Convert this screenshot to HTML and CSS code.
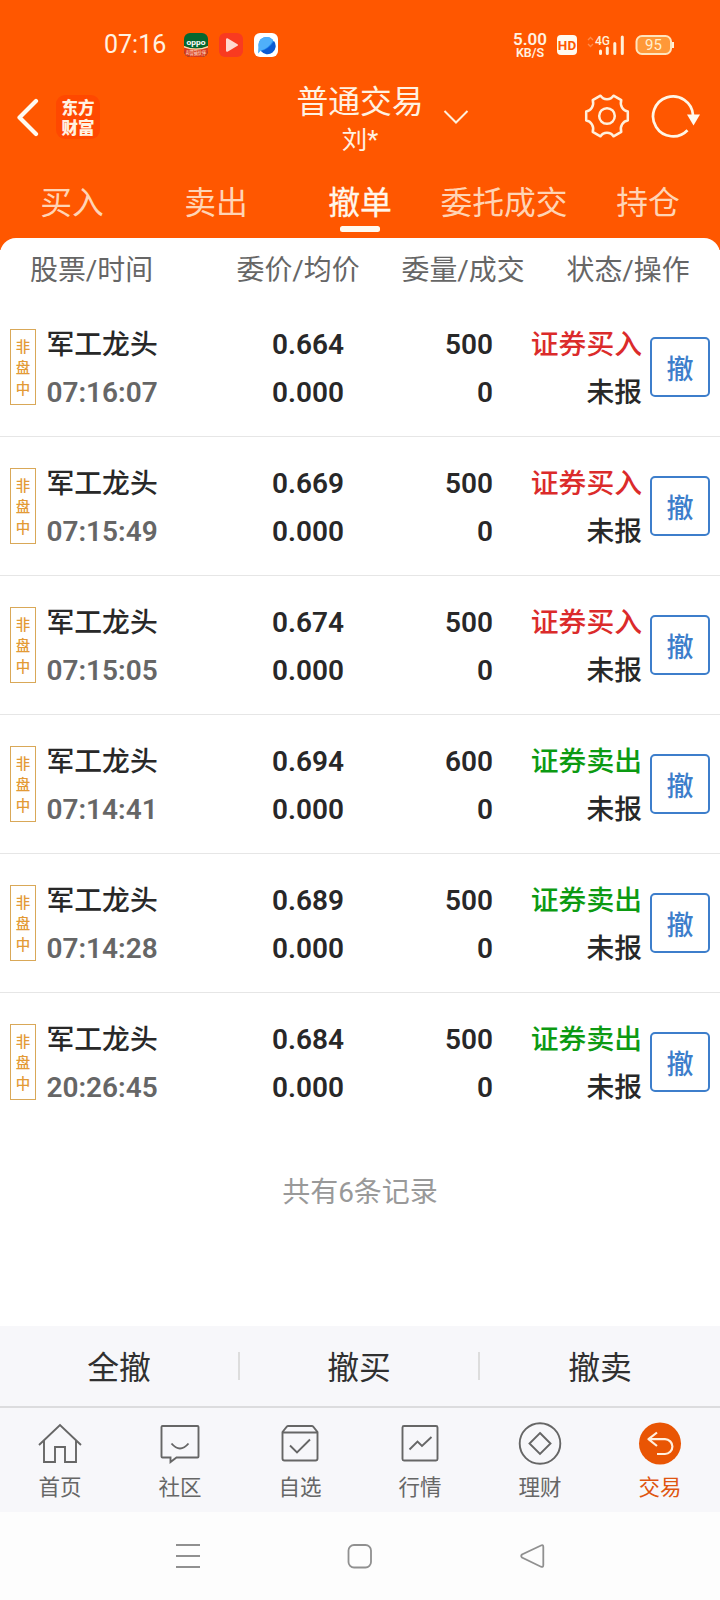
FILE: index.html
```html
<!DOCTYPE html>
<html lang="zh-CN">
<head>
<meta charset="utf-8">
<title>普通交易</title>
<link rel="stylesheet" href="styles.css">
</head>
<body>
<header class="top">
  <div class="status">
    <span class="clock">07:16</span>
    <svg class="app" width="24" height="24" viewBox="0 0 24 24"><defs><clipPath id="r"><rect width="24" height="24" rx="6"/></clipPath></defs><g clip-path="url(#r)"><rect width="24" height="24" fill="#04672f"/><path d="M0 13Q12 18 24 13V24H0Z" fill="#d83a20"/><path d="M0 13Q12 18 24 13V14.500Q12 19 0 14.500Z" fill="#f3e6b0"/></g><text x="12" y="11.500" text-anchor="middle" textLength="19" lengthAdjust="spacingAndGlyphs" class="oppo">oppo</text><text x="12" y="22" text-anchor="middle" class="tiny" textLength="20" lengthAdjust="spacingAndGlyphs">AI营销伙伴</text></svg>
    <svg class="app" width="24" height="24" viewBox="0 0 24 24"><rect width="24" height="24" rx="6" fill="#f93a20"/><path d="M8 6.200V17.800L18 12Z" fill="#ffd9d0" stroke="#ffd9d0" stroke-width="2" stroke-linejoin="round"/></svg>
    <svg class="app" width="24" height="24" viewBox="0 0 24 24"><rect width="24" height="24" rx="6" fill="#fff"/><circle cx="12.500" cy="12" r="8" fill="#238df0"/><path d="M20 8A8 8 0 0 1 7 18Q15 16 20 8Z" fill="#0b5bd3"/><path d="M4.500 12A8 8 0 0 1 19 7.500Q15 15 7 17.500L4 20.500Z" fill="#4fb0fa"/></svg>
    <div class="speed"><b>5.00</b><b>KB/S</b></div>
    <span class="hd">HD</span>
    <svg class="signal" width="40" height="24" viewBox="0 0 40 24"><path d="M2 7L4.500 4.500L7 7M2 11L4.500 13.500L7 11" fill="none" stroke="#ff8a48" stroke-width="1.300"/><text x="9" y="12" class="net" textLength="15" lengthAdjust="spacingAndGlyphs">4G</text><path d="M14.500 20.500V18M21.300 20.500V15M28.800 20.500V10.500M36.300 20.500V4" stroke="#fff0d8" stroke-width="3" stroke-linecap="round"/></svg>
    <svg class="battery" width="40" height="22" viewBox="0 0 40 22"><rect x="1.500" y="2" width="34.500" height="18" rx="5.500" fill="#ff9838" stroke="#ffe4bd" stroke-width="2"/><path d="M38 8V14" stroke="#fff0d8" stroke-width="2"/><text x="18.500" y="16" text-anchor="middle" class="level">95</text></svg>
  </div>
  <div class="titlebar">
    <svg class="back" width="24" height="44" viewBox="0 0 24 44"><path d="M19 6L2.500 22.500L19 39" fill="none" stroke="#fffaf0" stroke-width="4.200" stroke-linecap="round" stroke-linejoin="round"/></svg>
    <div class="logo"><span>东方</span><span>财富</span></div>
    <div class="title"><h1>普通交易</h1><p>刘*</p></div>
    <svg class="down" width="28" height="20" viewBox="0 0 28 20"><path d="M2.500 3L14 14.500L25.500 3" fill="none" stroke="#fff0dc" stroke-width="2"/></svg>
    <svg class="gear" width="48" height="48" viewBox="-24 -24 48 48"><path d="M20.800 -4.500V4.500C16 5 12.500 10.500 14.300 15.800L6.500 20.300C3.500 15.500 -3.500 15.500 -6.500 20.300L-14.300 15.800C-12.500 10.500 -16 5 -20.800 4.500V-4.500C-16 -5 -12.500 -10.500 -14.300 -15.800L-6.500 -20.300C-3.500 -15.500 3.500 -15.500 6.500 -20.300L14.300 -15.800C12.500 -10.500 16 -5 20.800 -4.500Z" fill="none" stroke="#fff0dc" stroke-width="2.500" stroke-linejoin="round"/><circle r="7.800" fill="none" stroke="#fff0dc" stroke-width="2.500"/></svg>
    <svg class="refresh" width="50" height="48" viewBox="0 0 50 48"><path d="M36.500 37.200A20 20 0 1 1 42 22" fill="none" stroke="#fff6e6" stroke-width="2.700"/><path d="M36 21.500H49L42.500 32.500Z" fill="#fffaf0"/></svg>
  </div>
  <nav class="tabs">
    <a>买入</a><a>卖出</a><a class="on">撤单</a><a>委托成交</a><a>持仓</a>
  </nav>
</header>
<main class="sheet">
  <div class="heads"><span>股票/时间</span><span>委价/均价</span><span>委量/成交</span><span>状态/操作</span></div>
  <section class="orders">
    <article class="row"><div class="badge"><i>非</i><i>盘</i><i>中</i></div><div class="cell name"><span>军工龙头</span><time>07:16:07</time></div><div class="cell num"><span>0.664</span><span>0.000</span></div><div class="cell num"><span>500</span><span>0</span></div><div class="cell"><span class="buy">证券买入</span><span>未报</span></div><button class="cancel">撤</button></article>
    <article class="row"><div class="badge"><i>非</i><i>盘</i><i>中</i></div><div class="cell name"><span>军工龙头</span><time>07:15:49</time></div><div class="cell num"><span>0.669</span><span>0.000</span></div><div class="cell num"><span>500</span><span>0</span></div><div class="cell"><span class="buy">证券买入</span><span>未报</span></div><button class="cancel">撤</button></article>
    <article class="row"><div class="badge"><i>非</i><i>盘</i><i>中</i></div><div class="cell name"><span>军工龙头</span><time>07:15:05</time></div><div class="cell num"><span>0.674</span><span>0.000</span></div><div class="cell num"><span>500</span><span>0</span></div><div class="cell"><span class="buy">证券买入</span><span>未报</span></div><button class="cancel">撤</button></article>
    <article class="row"><div class="badge"><i>非</i><i>盘</i><i>中</i></div><div class="cell name"><span>军工龙头</span><time>07:14:41</time></div><div class="cell num"><span>0.694</span><span>0.000</span></div><div class="cell num"><span>600</span><span>0</span></div><div class="cell"><span class="sell">证券卖出</span><span>未报</span></div><button class="cancel">撤</button></article>
    <article class="row"><div class="badge"><i>非</i><i>盘</i><i>中</i></div><div class="cell name"><span>军工龙头</span><time>07:14:28</time></div><div class="cell num"><span>0.689</span><span>0.000</span></div><div class="cell num"><span>500</span><span>0</span></div><div class="cell"><span class="sell">证券卖出</span><span>未报</span></div><button class="cancel">撤</button></article>
    <article class="row"><div class="badge"><i>非</i><i>盘</i><i>中</i></div><div class="cell name"><span>军工龙头</span><time>20:26:45</time></div><div class="cell num"><span>0.684</span><span>0.000</span></div><div class="cell num"><span>500</span><span>0</span></div><div class="cell"><span class="sell">证券卖出</span><span>未报</span></div><button class="cancel">撤</button></article>
  </section>
  <p class="count">共有6条记录</p>
</main>
<div class="actions"><a>全撤</a><a>撤买</a><a>撤卖</a></div>
<nav class="dock">
  <a><svg width="44" height="44" viewBox="0 0 44 44"><path d="M1 23L22 3L43 23M6 18.500V40H17V25H27V40H38V18.500" /></svg><span>首页</span></a>
  <a><svg width="44" height="44" viewBox="0 0 44 44"><path d="M4.500 4H39.500Q40.500 4 40.500 5V34.500Q40.500 35.500 39.500 35.500H18.500L12.500 40V35.500H4.500Q3.500 35.500 3.500 34.500V5Q3.500 4 4.500 4ZM13.500 21.500Q22 31.500 30.500 21.500"/></svg><span>社区</span></a>
  <a><svg width="44" height="44" viewBox="0 0 44 44"><path d="M4.500 10L9 4.500Q9.500 4 10 4H34Q34.500 4 35 4.500L39.500 10V36.500Q39.500 38.500 37.500 38.500H6.500Q4.500 38.500 4.500 36.500ZM4.500 10.500H39.500M12 23.500L19 30.500L32 17.500"/></svg><span>自选</span></a>
  <a><svg width="44" height="44" viewBox="0 0 44 44"><rect x="4.500" y="4" width="35" height="34.500" rx="1.500"/><path d="M11.500 27.500L19.500 19.500L24 24L33.500 15"/></svg><span>行情</span></a>
  <a><svg width="44" height="44" viewBox="0 0 44 44"><circle cx="22" cy="21.500" r="20.300"/><path d="M22 11L32.500 21.500L22 32L11.500 21.500Z"/></svg><span>理财</span></a>
  <a class="on"><svg width="44" height="44" viewBox="0 0 44 44"><circle cx="22" cy="21.500" r="21" class="disc"/><path d="M19 10.500L10.500 17.200L19 24M10.500 17.200H27A7.200 7.200 0 0 1 27 32H19" class="arrow"/></svg><span>交易</span></a>
</nav>
<footer class="sys">
  <svg width="24" height="26" viewBox="0 0 24 26"><path d="M0 2H24M0 13H24M0 24H24"/></svg>
  <svg width="26" height="26" viewBox="0 0 26 26"><rect x="1.500" y="2" width="22.500" height="22.500" rx="5.500"/></svg>
  <svg width="26" height="26" viewBox="0 0 26 26"><path d="M21 2.500Q23.300 1.500 23.300 4V22Q23.300 24.500 21 23.700L2 14.500Q.5 13 2 11.500Z"/></svg>
</footer>
</body>
</html>
```

FILE: styles.css
```css
* { box-sizing: border-box; margin: 0; padding: 0; }
body { width: 720px; height: 1600px; display: flex; flex-direction: column; background: #fff; font-family: Roboto, "Noto Sans CJK SC", sans-serif; color: #282828; overflow: hidden; }
svg { display: block; flex: none; }
.top { height: 250px; background: #ff5700; color: #fff2e2; }
.status { height: 70px; padding: 20px 0 0 104px; display: flex; align-items: flex-start; }
.clock, .app, .speed, .hd, .signal, .battery { flex: none; }
.clock { width: 80px; margin-top: 10px; font-size: 25px; line-height: 30px; }
.app { margin: 13px 11px 0 0; }
.oppo { font: bold 7px Roboto, sans-serif; fill: #fff; }
.tiny { font: 6px "Noto Sans CJK SC", sans-serif; fill: #ffe0d0; }
.speed { width: 34px; margin: 11px 0 0 224px; display: flex; flex-direction: column; align-items: center; font-family: Roboto, sans-serif; font-size: 17px; line-height: 16px; }
.speed b { font-weight: 600; }
.speed b + b { font-size: 12.500px; line-height: 12px; }
.hd { width: 20px; height: 20px; margin: 15px 0 0 10px; border-radius: 4px; background: #fffaf0; color: #ff5700; font: bold 13.500px/20px Roboto, sans-serif; text-align: center; }
.signal { margin: 13px 0 0 9px; }
.net { font: 500 13.500px Roboto, sans-serif; fill: #fff0d8; }
.battery { margin: 14px 0 0 9px; }
.level { font: 15px Roboto, sans-serif; fill: #fff0d0; }
.titlebar { height: 98px; display: grid; grid-template-columns: 56px 44px 160px 182px 141px 68px 69px; align-items: center; }
.back { margin: -4px 0 0 17px; }
.logo { width: 44px; height: 44px; margin-top: -4px; border-radius: 9px; background: #ff4800; display: flex; flex-direction: column; align-items: center; justify-content: center; font: 900 16.500px/20px "Noto Sans CJK SC", sans-serif; }
.title { grid-column: 4; margin-left: 18px; text-align: center; width: 164px; height: 98px; padding-top: 11px; }
.title h1 { font-size: 31.800px; font-weight: 400; line-height: 42px; }
.title p { font-size: 25.500px; line-height: 34px; }
.down { margin-top: -2px; }
.gear { margin-top: -6px; }
.refresh { margin: -4px 0 0; }
.tabs { height: 82px; display: grid; grid-template-columns: repeat(5, 144px); font-size: 31.800px; line-height: 46px; color: #ffd4b5; }
.tabs a { text-align: center; padding-top: 12px; }
.tabs .on { color: #fff6ea; -webkit-text-stroke: .3px #fff6ea; }
.tabs .on::after { content: ""; display: block; width: 40px; height: 6px; border-radius: 2.500px; background: #fffaf0; margin: 0 auto; }
.sheet { height: 1088px; margin-top: -12px; border-radius: 16px 16px 0 0; background: #fff; }
.heads { height: 60px; display: grid; grid-template-columns: 206.500px 165px 165px 153px; padding-left: 30px; font-size: 27.900px; line-height: 66px; color: #666; }
.row { height: 139px; border-bottom: 1px solid #e6e6e6; padding: 0 10px; display: grid; grid-template-columns: 26px 180px 128px 149px 149px 68px; align-items: center; }
.row:last-child { border-color: transparent; }
.badge { height: 76px; margin-top: -1px; border: 1px solid #d9a858; padding-top: 5px; color: #e39a35; }
.badge i { display: block; text-align: center; font: normal 500 14.500px/21px "Noto Sans CJK SC", sans-serif; }
.cell { display: flex; flex-direction: column; padding-top: 4px; text-align: right; font-size: 27.800px; line-height: 48px; font-weight: 500; }
.name { text-align: left; padding-left: 10.500px; }
.name time, .num { font-weight: 600; font-size: 28px; }
.name time { color: #666; }
.buy { color: #db2b2b; }
.sell { color: #0c9a12; }
.cancel { width: 60px; height: 60px; margin: -1px 0 0 8px; padding-top: 2px; border: 2px solid #3d7ecb; border-radius: 5px; background: #fff; color: #3d7ecb; font: 500 27px/1 "Noto Sans CJK SC", sans-serif; }
.count { margin-top: 41px; text-align: center; font-size: 28px; line-height: 40px; color: #999; }
.actions { height: 82px; flex: none; background: #f7f7fa; border-bottom: 2px solid #dcdcde; display: grid; grid-template-columns: repeat(3, 1fr); align-items: center; font-size: 31.800px; text-align: center; color: #303030; }
.actions a { height: 28px; line-height: 32px; }
.actions a:not(:last-child) { border-right: 2px solid #ddd; }
.dock { height: 104px; flex: none; background: #f7f7fa; display: grid; grid-template-columns: repeat(6, 1fr); color: #666; }
.dock a { display: flex; flex-direction: column; align-items: center; padding-top: 13.500px; font-size: 21.500px; line-height: 30px; }
.dock span { margin-top: 7px; }
.dock svg { fill: none; stroke: #666; stroke-width: 1.900px; }
.dock .on { color: #df5510; }
.dock .disc { fill: #e95504; stroke: none; }
.dock .arrow { stroke: #fff0df; stroke-width: 2.200px; stroke-linejoin: round; }
.sys { height: 88px; flex: none; background: #fdfdfd; display: flex; padding: 31px 0 0 176px; }
.sys svg { fill: none; stroke: #909090; stroke-width: 1.800px; }
.sys svg + svg { margin-left: 147px; }
```
